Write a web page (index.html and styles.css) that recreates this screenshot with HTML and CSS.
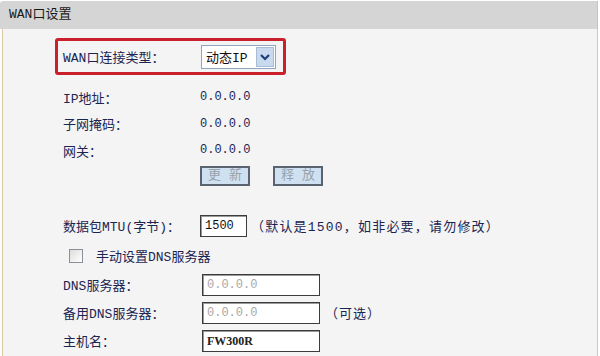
FILE: index.html
```html
<!DOCTYPE html>
<html lang="zh-CN">
<head>
<meta charset="utf-8">
<title>WAN口设置</title>
<link rel="stylesheet" href="styles.css">
</head>
<body>
<div class="panel">
  <div class="head">WAN口设置</div>
  <div class="body">
    <div class="hl">
      <span class="lab">WAN口连接类型：</span>
      <div class="sel">
        <span class="seltxt">动态IP</span>
        <span class="arr"><svg width="12" height="8" viewBox="0 0 12 8"><path d="M2 2 L6 6 L10 2" fill="none" stroke="#1e3f78" stroke-width="2.2"/></svg></span>
      </div>
    </div>
    <div class="row r27 first"><span class="lab">IP地址：</span><span class="val">0.0.0.0</span></div>
    <div class="row r27"><span class="lab">子网掩码：</span><span class="val">0.0.0.0</span></div>
    <div class="row r27"><span class="lab">网关：</span><span class="val">0.0.0.0</span></div>
    <div class="row btnrow"><span class="lab"></span><span class="btns"><span class="btn">更 新</span><span class="btn">释 放</span></span></div>
    <div class="row mtu"><span class="lab">数据包MTU(字节)：</span><span class="inline"><span class="inp small">1500</span><span class="note">（默认是1500，如非必要，请勿修改）</span></span></div>
    <div class="chk"><span class="box"></span><span class="chktxt">手动设置DNS服务器</span></div>
    <div class="row r28"><span class="lab">DNS服务器：</span><span class="inline"><span class="inp wide dis">0.0.0.0</span></span></div>
    <div class="row r28"><span class="lab">备用DNS服务器：</span><span class="inline"><span class="inp wide dis">0.0.0.0</span><span class="note opt">（可选）</span></span></div>
    <div class="row r28"><span class="lab">主机名：</span><span class="inline"><span class="inp wide host">FW300R</span></span></div>
  </div>
</div>
</body>
</html>
```
FILE: styles.css
```css
html, body {
  margin: 0;
  padding: 0;
  background: #ffffff;
}
body {
  font-family: "Liberation Mono", "Noto Sans CJK SC", monospace;
  font-size: 13px;
  color: #1c2452;
  width: 600px;
  height: 356px;
  overflow: hidden;
}
.panel {
  width: 598px;
  margin-top: 1px;
}
.head {
  height: 28px;
  line-height: 28px;
  background: #d5d5d5;
  color: #1a1a1a;
  padding-left: 9px;
  font-size: 13px;
  border-right: 1px solid #c4c4c4;
  border-top-left-radius: 3px;
}
.body {
  background: #f4f4f4;
  border-left: 1px solid #d9c9a0;
  border-right: 1px solid #d9c9a0;
  margin-left: 2px;
  height: 330px;
  padding-top: 9px;
  box-sizing: content-box;
}
.hl {
  margin-left: 52px;
  width: 220px;
  height: 31px;
  border: 3px solid #c9202b;
  border-radius: 3px;
  display: flex;
  align-items: center;
  padding-left: 5px;
}
.hl .lab {
  width: 138px;
}
.sel {
  width: 73px;
  height: 22px;
  border: 1px solid #8fa4bd;
  background: #ffffff;
  display: flex;
  align-items: center;
}
.seltxt {
  flex: 1;
  padding-left: 4px;
  color: #111;
}
.arr {
  width: 18px;
  height: 20px;
  margin-right: 1px;
  background: #c9d9ee;
  border: 1px solid #a8bcd8;
  box-sizing: border-box;
  display: flex;
  align-items: center;
  justify-content: center;
}
.row {
  display: grid;
  grid-template-columns: 137px auto;
  align-items: center;
  padding-left: 60px;
}
.r27 { height: 26.5px; }
.first { margin-top: 9px; }
.val {
  font-size: 12px;
  color: #1c2452;
}
.btnrow {
  height: 22px;
  margin-top: 1px;
}
.btns {
  display: flex;
  gap: 23px;
}
.btn {
  width: 46px;
  height: 16px;
  line-height: 16px;
  text-align: center;
  background: #cfe1f0;
  border: 2px solid #5a6470;
  color: #98a2ad;
  font-size: 13px;
}
.mtu {
  height: 28px;
  margin-top: 25px;
}
.inline {
  display: flex;
  align-items: center;
}
.inp {
  height: 20px;
  line-height: 20px;
  background: #ffffff;
  border: 1px solid #3c3c3c;
  box-shadow: inset 1px 1px 0 #9a9a9a;
  padding-left: 4px;
  box-sizing: content-box;
  font-size: 12px;
  color: #111;
}
.small { width: 41px; }
.wide { width: 112px; margin-left: 2px; }
.dis { color: #a8a8a8; }
.host { font-family: "Liberation Serif", "Noto Sans CJK SC", serif; font-weight: bold; color: #222; }
.note {
  margin-left: 4px;
  letter-spacing: 1.2px;
}
.opt {
  margin-left: 5px;
  letter-spacing: 1px;
}
.chk {
  height: 30px;
  display: flex;
  align-items: center;
  padding-left: 66px;
  margin-top: 1px;
}
.box {
  width: 12px;
  height: 12px;
  border: 1px solid #8a8e96;
  background: linear-gradient(135deg, #dcdcdc, #ffffff);
}
.chktxt {
  margin-left: 13px;
}
.r28 { height: 28px; }
```
